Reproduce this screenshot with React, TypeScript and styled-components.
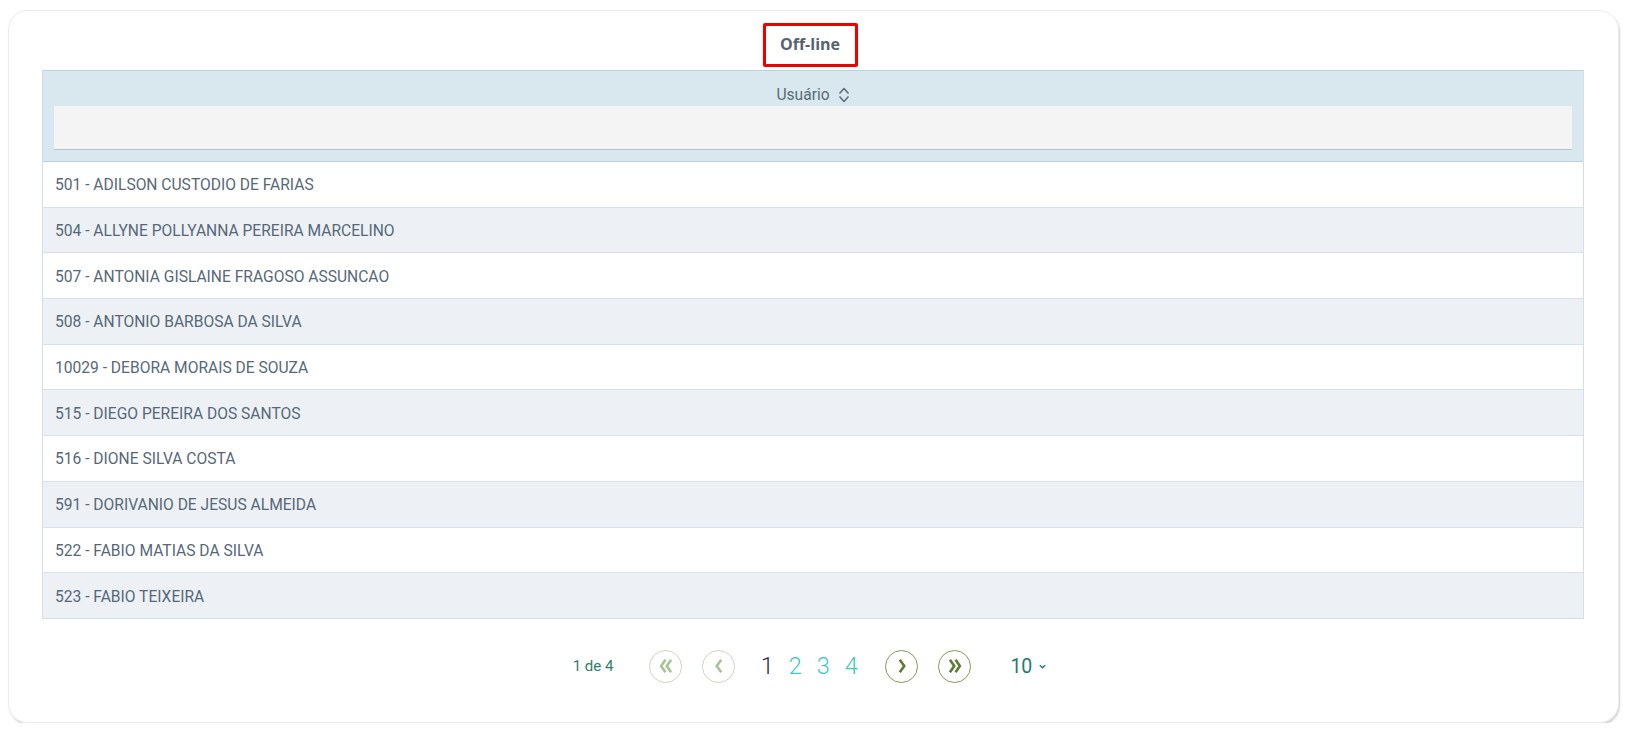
import React from 'react';
import styled, { createGlobalStyle } from 'styled-components';

const GlobalStyle = createGlobalStyle`
  html, body {
    margin: 0;
    background: #ffffff;
    font-family: Roboto, "Liberation Sans", sans-serif;
    overflow: hidden;
  }
`;

const Page = styled.div`
  padding: 10px 8px 0 8px;
`;

const Card = styled.div`
  width: 1611px;
  height: 713px;
  box-sizing: border-box;
  border: 1px solid #ececec;
  border-radius: 20px;
  box-shadow: 1px 2px 2px rgba(0, 0, 0, 0.18);
  padding: 12px 34px 0 33px;
  display: flex;
  flex-direction: column;
  align-items: stretch;
`;

const TitleRow = styled.div`
  display: flex;
  justify-content: center;
  padding-right: 6px;
  margin-bottom: 3px;
`;

const TitleBox = styled.div`
  width: 95px;
  height: 44px;
  box-sizing: border-box;
  border: 3px solid #ee0000;
  border-radius: 2px;
  display: flex;
  align-items: center;
  justify-content: center;
  font-family: "Open Sans", sans-serif;
  font-weight: 700;
  font-size: 16px;
  color: #55636e;
  padding-bottom: 2px;
`;

const Table = styled.div`
  border: 1px solid #d3dfe6;
  border-top-color: #bcd2dc;
`;

const Header = styled.div`
  background: #d9e8ef;
  border-bottom: 1px solid #bcd2dc;
  padding: 13px 11px 11px 11px;
  display: flex;
  flex-direction: column;
  align-items: stretch;
`;

const HeaderLabel = styled.div`
  display: flex;
  align-items: center;
  justify-content: center;
  gap: 8px;
  font-size: 15.6px;
  color: #5a6b78;
  height: 22px;
`;

const FilterBox = styled.div`
  height: 43px;
  background: #f4f4f4;
  border-bottom: 1px solid #b4c3cb;
`;

const Row = styled.div<{ $alt: boolean }>`
  height: 42.7px;
  display: flex;
  align-items: center;
  padding: 2px 0 0 12px;
  font-size: 15.6px;
  color: #566878;
  background: ${p => (p.$alt ? '#edf1f6' : '#ffffff')};
  border-top: 1px solid #d8e2e8;
  &:first-child {
    border-top: none;
  }
`;

const Body = styled.div``;

const Pager = styled.div`
  display: flex;
  align-items: center;
  justify-content: center;
  margin-top: 31px;
  padding-right: 6px;
`;

const PageInfo = styled.span`
  font-size: 15px;
  color: #2f7d6e;
  margin-right: 36px;
`;

const CircleButton = styled.div<{ $disabled: boolean; $gap: number }>`
  width: 33px;
  height: 33px;
  box-sizing: border-box;
  border-radius: 50%;
  border: 1px solid ${p => (p.$disabled ? '#c9d8bd' : '#7e9a5a')};
  color: ${p => (p.$disabled ? '#a9c294' : '#5b7b32')};
  display: flex;
  align-items: center;
  justify-content: center;
  margin-right: ${p => p.$gap}px;
`;

const PageNumber = styled.span<{ $active: boolean }>`
  font-size: 23.5px;
  font-weight: 300;
  width: 28px;
  text-align: center;
  color: ${p => (p.$active ? '#2d1f55' : '#3cc7c0')};
`;

const Numbers = styled.div`
  display: flex;
  align-items: center;
  margin-right: 20px;
`;

const PageSize = styled.div`
  display: flex;
  align-items: center;
  gap: 6px;
  font-size: 19.5px;
  color: #1d7a78;
`;

const Chevron = ({ dir, double }: { dir: 'left' | 'right'; double?: boolean }) => {
  const flip = dir === 'left' ? 'scale(-1,1) translate(-16,0)' : undefined;
  return (
    <svg width="18" height="18" viewBox="0 0 16 16">
      <g transform={flip} fill="none" stroke="currentColor" strokeWidth="2.3" strokeLinejoin="miter">
        {double ? (
          <>
            <path d="M3.5 2.5 L7.3 8 L3.5 13.5" />
            <path d="M8.5 2.5 L12.3 8 L8.5 13.5" />
          </>
        ) : (
          <path d="M6 2.5 L10 8 L6 13.5" />
        )}
      </g>
    </svg>
  );
};

const SortIcon = () => (
  <svg width="12" height="16" viewBox="0 0 12 16">
    <path d="M1.5 6.5 L6 1.5 L10.5 6.5" fill="none" stroke="#5a6b78" strokeWidth="1.5" strokeLinejoin="round" />
    <path d="M1.5 9.5 L6 14.5 L10.5 9.5" fill="none" stroke="#5a6b78" strokeWidth="1.5" strokeLinejoin="round" />
  </svg>
);

const SmallDown = () => (
  <svg width="9" height="9" viewBox="0 0 10 10">
    <path d="M2 3.5 L5 6.5 L8 3.5" fill="none" stroke="#1d7a78" strokeWidth="1.6" />
  </svg>
);

const users = [
  '501 - ADILSON CUSTODIO DE FARIAS',
  '504 - ALLYNE POLLYANNA PEREIRA MARCELINO',
  '507 - ANTONIA GISLAINE FRAGOSO ASSUNCAO',
  '508 - ANTONIO BARBOSA DA SILVA',
  '10029 - DEBORA MORAIS DE SOUZA',
  '515 - DIEGO PEREIRA DOS SANTOS',
  '516 - DIONE SILVA COSTA',
  '591 - DORIVANIO DE JESUS ALMEIDA',
  '522 - FABIO MATIAS DA SILVA',
  '523 - FABIO TEIXEIRA',
];

export default function App() {
  return (
    <>
      <GlobalStyle />
      <Page>
        <Card>
          <TitleRow>
            <TitleBox>Off-line</TitleBox>
          </TitleRow>
          <Table>
            <Header>
              <HeaderLabel>
                Usuário <SortIcon />
              </HeaderLabel>
              <FilterBox />
            </Header>
            <Body>
              {users.map((u, i) => (
                <Row key={u} $alt={i % 2 === 1}>
                  {u}
                </Row>
              ))}
            </Body>
          </Table>
          <Pager>
            <PageInfo>1 de 4</PageInfo>
            <CircleButton $disabled $gap={20}>
              <Chevron dir="left" double />
            </CircleButton>
            <CircleButton $disabled $gap={18}>
              <Chevron dir="left" />
            </CircleButton>
            <Numbers>
              {[1, 2, 3, 4].map(n => (
                <PageNumber key={n} $active={n === 1}>
                  {n}
                </PageNumber>
              ))}
            </Numbers>
            <CircleButton $disabled={false} $gap={20}>
              <Chevron dir="right" />
            </CircleButton>
            <CircleButton $disabled={false} $gap={39}>
              <Chevron dir="right" double />
            </CircleButton>
            <PageSize>
              10 <SmallDown />
            </PageSize>
          </Pager>
        </Card>
      </Page>
    </>
  );
}
